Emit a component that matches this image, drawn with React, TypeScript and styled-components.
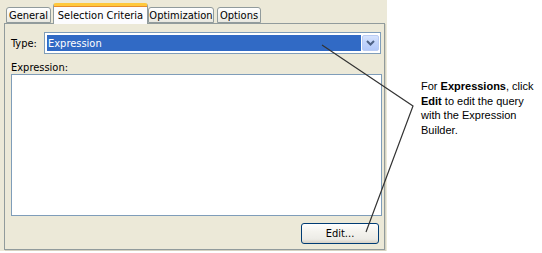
import React from "react";
import styled, { createGlobalStyle } from "styled-components";

const Global = createGlobalStyle`
  html, body { margin: 0; padding: 0; background: #ffffff; }
  body { width: 542px; height: 253px; overflow: hidden; font-family: "Liberation Sans", Arial, sans-serif; }
`;

const Page = styled.div`
  position: relative;
  width: 542px;
  height: 253px;
  display: flex;
  align-items: flex-start;
`;

const Dialog = styled.div`
  width: 387px;
  height: 251px;
  background: #ece9d8;
  box-sizing: border-box;
  padding: 3px 3px 0 4px;
  display: flex;
  flex-direction: column;
  font-family: "DejaVu Sans Condensed", "DejaVu Sans", Tahoma, sans-serif;
  font-size: 11px;
  color: #000;
`;

const TabRow = styled.div`
  display: flex;
  align-items: flex-end;
  height: 20px;
  position: relative;
  z-index: 2;
`;

const Tab = styled.div<{ $active?: boolean; $w: number; $ml: number }>`
  box-sizing: border-box;
  width: ${(p) => p.$w}px;
  margin-left: ${(p) => p.$ml}px;
  height: ${(p) => (p.$active ? 21 : 16)}px;
  margin-bottom: ${(p) => (p.$active ? -1 : 0)}px;
  border: 1px solid #919b9c;
  border-bottom: ${(p) => (p.$active ? "none" : "1px solid #919b9c")};
  border-top: ${(p) => (p.$active ? "3px solid #ffc83c" : "1px solid #919b9c")};
  border-radius: 3px 3px 0 0;
  background: ${(p) =>
    p.$active ? "#fcfcfe" : "linear-gradient(#ffffff, #f3f3ef 60%, #e8e7df)"};
  display: flex;
  align-items: center;
  justify-content: center;
  padding-top: ${(p) => (p.$active ? 0 : 1)}px;
  white-space: nowrap;
  box-shadow: ${(p) => (p.$active ? "inset 0 1px 0 #e68b2c" : "none")};
`;

const Panel = styled.div`
  box-sizing: border-box;
  width: 381px;
  height: 227px;
  border: 1px solid #919b9c;
  box-shadow: 1px 1px 0 #d6d3c2;
  padding: 8px 2px 0 6px;
  display: flex;
  flex-direction: column;
`;

const TypeRow = styled.div`
  display: flex;
  align-items: center;
  height: 22px;
`;

const Label = styled.span`
  width: 33px;
  line-height: 13px;
`;

const Combo = styled.div`
  box-sizing: border-box;
  width: 337px;
  height: 22px;
  border: 1px solid #7f9db9;
  background: #fff;
  padding: 2px 1px 2px 2px;
  display: flex;
  gap: 1px;
`;

const Selected = styled.div`
  flex: 1;
  background: #316ac5;
  color: #fff;
  padding-left: 1px;
  display: flex;
  align-items: center;
`;

const DropButton = styled.div`
  box-sizing: border-box;
  width: 17px;
  border: 1px solid #b9cbf3;
  border-radius: 2px;
  background: linear-gradient(#d6e3fd, #c1d3fb 50%, #b2c8fa);
  display: flex;
  align-items: center;
  justify-content: center;
`;

const ExprLabel = styled.div`
  margin-top: 7px;
  line-height: 13px;
`;

const TextArea = styled.div`
  box-sizing: border-box;
  width: 371px;
  height: 142px;
  border: 1px solid #7f9db9;
  background: #fff;
`;

const ButtonRow = styled.div`
  display: flex;
  justify-content: flex-end;
  padding-right: 3px;
  margin-top: 7px;
`;

const Button = styled.div`
  box-sizing: border-box;
  width: 78px;
  height: 21px;
  border: 1px solid #003c74;
  border-radius: 3px;
  background: linear-gradient(#ffffff, #f4f3ee 40%, #ecebe6 80%, #d6d0c5);
  display: flex;
  align-items: center;
  justify-content: center;
`;

const Note = styled.div`
  margin-left: 34px;
  margin-top: 79px;
  font-family: "Liberation Sans", Arial, sans-serif;
  font-size: 11px;
  line-height: 14.5px;
  color: #000;
`;

const Overlay = styled.svg`
  position: absolute;
  left: 0;
  top: 0;
  pointer-events: none;
`;

export default function App() {
  return (
    <>
      <Global />
      <Page>
        <Dialog>
          <TabRow>
            <Tab $w={45} $ml={2}>General</Tab>
            <Tab $active $w={95} $ml={2}>Selection Criteria</Tab>
            <Tab $w={66} $ml={0}>Optimization</Tab>
            <Tab $w={44} $ml={3}>Options</Tab>
          </TabRow>
          <Panel>
            <TypeRow>
              <Label>Type:</Label>
              <Combo>
                <Selected>Expression</Selected>
                <DropButton>
                  <svg width="9" height="6" viewBox="0 0 9 6">
                    <path d="M1 1 L4.5 4.5 L8 1" fill="none" stroke="#4d6185" strokeWidth="2" />
                  </svg>
                </DropButton>
              </Combo>
            </TypeRow>
            <ExprLabel>Expression:</ExprLabel>
            <TextArea />
            <ButtonRow>
              <Button>Edit...</Button>
            </ButtonRow>
          </Panel>
        </Dialog>
        <Note>
          For <b>Expressions</b>, click
          <br />
          <b>Edit</b> to edit the query
          <br />
          with the Expression
          <br />
          Builder.
        </Note>
        <Overlay width="542" height="253">
          <polyline points="322,45 413,106 366,232" fill="none" stroke="#333" strokeWidth="1.2" />
        </Overlay>
      </Page>
    </>
  );
}
